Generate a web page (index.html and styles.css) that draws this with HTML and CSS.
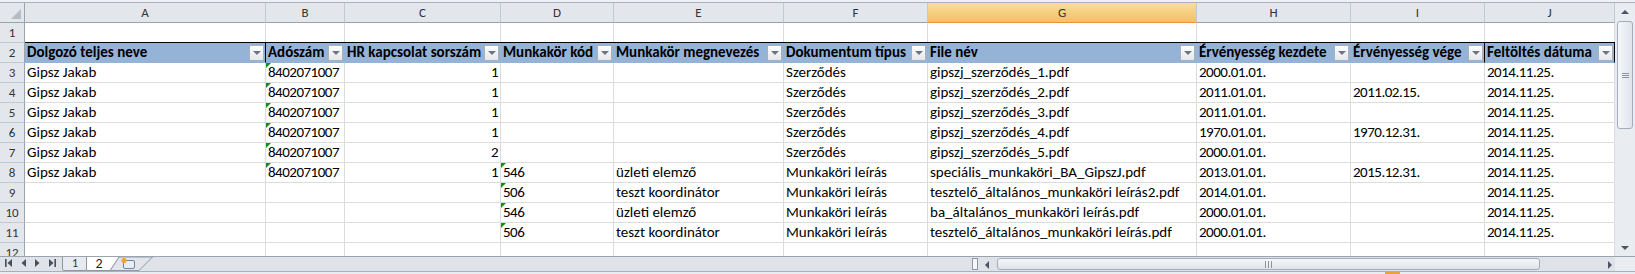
FILE: index.html
```html
<!DOCTYPE html>
<html lang="hu">
<head>
  <meta charset="UTF-8">
  <meta name="viewport" content="width=device-width, initial-scale=1.0">
  <title>Dokumentumok - munkalap 2</title>

  <link rel="stylesheet" href="styles.css">
</head>
<body>

  <div class="window">
    <div class="workarea">

      <div class="sheet">
        <!-- oszlopfejlécek -->
        <div class="cell corner"></div>
        <div class="cell col">A</div>
        <div class="cell col">B</div>
        <div class="cell col">C</div>
        <div class="cell col">D</div>
        <div class="cell col">E</div>
        <div class="cell col">F</div>
        <div class="cell col col_active">G</div>
        <div class="cell col">H</div>
        <div class="cell col">I</div>
        <div class="cell col">J</div>

        <!-- 1 -->
        <div class="cell row">1</div>
        <div class="cell"></div><div class="cell"></div><div class="cell"></div><div class="cell"></div><div class="cell"></div>
        <div class="cell"></div><div class="cell"></div><div class="cell"></div><div class="cell"></div><div class="cell"></div>

        <!-- 2: táblázat fejléc -->
        <div class="cell row">2</div>
        <div class="cell head head_edge"><span>Dolgozó teljes neve</span><span class="filter"></span></div>
        <div class="cell head"><span>Adószám</span><span class="filter"></span></div>
        <div class="cell head"><span>HR kapcsolat sorszám</span><span class="filter"></span></div>
        <div class="cell head"><span>Munkakör kód</span><span class="filter"></span></div>
        <div class="cell head"><span>Munkakör megnevezés</span><span class="filter"></span></div>
        <div class="cell head"><span>Dokumentum típus</span><span class="filter"></span></div>
        <div class="cell head"><span>File név</span><span class="filter"></span></div>
        <div class="cell head"><span>Érvényesség kezdete</span><span class="filter"></span></div>
        <div class="cell head head_edge"><span>Érvényesség vége</span><span class="filter"></span></div>
        <div class="cell head head_edge"><span>Feltöltés dátuma</span><span class="filter"></span></div>

        <!-- 3 -->
        <div class="cell row">3</div>
        <div class="cell">Gipsz Jakab</div>
        <div class="cell d t">8402071007</div>
        <div class="cell d num">1</div>
        <div class="cell"></div>
        <div class="cell"></div>
        <div class="cell">Szerződés</div>
        <div class="cell">gipszj_szerződés_1.pdf</div>
        <div class="cell d">2000.01.01.</div>
        <div class="cell"></div>
        <div class="cell d">2014.11.25.</div>

        <!-- 4 -->
        <div class="cell row">4</div>
        <div class="cell">Gipsz Jakab</div>
        <div class="cell d t">8402071007</div>
        <div class="cell d num">1</div>
        <div class="cell"></div>
        <div class="cell"></div>
        <div class="cell">Szerződés</div>
        <div class="cell">gipszj_szerződés_2.pdf</div>
        <div class="cell d">2011.01.01.</div>
        <div class="cell d">2011.02.15.</div>
        <div class="cell d">2014.11.25.</div>

        <!-- 5 -->
        <div class="cell row">5</div>
        <div class="cell">Gipsz Jakab</div>
        <div class="cell d t">8402071007</div>
        <div class="cell d num">1</div>
        <div class="cell"></div>
        <div class="cell"></div>
        <div class="cell">Szerződés</div>
        <div class="cell">gipszj_szerződés_3.pdf</div>
        <div class="cell d">2011.01.01.</div>
        <div class="cell"></div>
        <div class="cell d">2014.11.25.</div>

        <!-- 6 -->
        <div class="cell row">6</div>
        <div class="cell">Gipsz Jakab</div>
        <div class="cell d t">8402071007</div>
        <div class="cell d num">1</div>
        <div class="cell"></div>
        <div class="cell"></div>
        <div class="cell">Szerződés</div>
        <div class="cell">gipszj_szerződés_4.pdf</div>
        <div class="cell d">1970.01.01.</div>
        <div class="cell d">1970.12.31.</div>
        <div class="cell d">2014.11.25.</div>

        <!-- 7 -->
        <div class="cell row">7</div>
        <div class="cell">Gipsz Jakab</div>
        <div class="cell d t">8402071007</div>
        <div class="cell d num">2</div>
        <div class="cell"></div>
        <div class="cell"></div>
        <div class="cell">Szerződés</div>
        <div class="cell">gipszj_szerződés_5.pdf</div>
        <div class="cell d">2000.01.01.</div>
        <div class="cell"></div>
        <div class="cell d">2014.11.25.</div>

        <!-- 8 -->
        <div class="cell row">8</div>
        <div class="cell">Gipsz Jakab</div>
        <div class="cell d t">8402071007</div>
        <div class="cell d num">1</div>
        <div class="cell d t">546</div>
        <div class="cell">üzleti elemző</div>
        <div class="cell">Munkaköri leírás</div>
        <div class="cell">speciális_munkaköri_BA_GipszJ.pdf</div>
        <div class="cell d">2013.01.01.</div>
        <div class="cell d">2015.12.31.</div>
        <div class="cell d">2014.11.25.</div>

        <!-- 9 -->
        <div class="cell row">9</div>
        <div class="cell"></div>
        <div class="cell"></div>
        <div class="cell"></div>
        <div class="cell d t">506</div>
        <div class="cell">teszt koordinátor</div>
        <div class="cell">Munkaköri leírás</div>
        <div class="cell">tesztelő_általános_munkaköri leírás2.pdf</div>
        <div class="cell d">2014.01.01.</div>
        <div class="cell"></div>
        <div class="cell d">2014.11.25.</div>

        <!-- 10 -->
        <div class="cell row">10</div>
        <div class="cell"></div>
        <div class="cell"></div>
        <div class="cell"></div>
        <div class="cell d t">546</div>
        <div class="cell">üzleti elemző</div>
        <div class="cell">Munkaköri leírás</div>
        <div class="cell">ba_általános_munkaköri leírás.pdf</div>
        <div class="cell d">2000.01.01.</div>
        <div class="cell"></div>
        <div class="cell d">2014.11.25.</div>

        <!-- 11 -->
        <div class="cell row">11</div>
        <div class="cell"></div>
        <div class="cell"></div>
        <div class="cell"></div>
        <div class="cell d t">506</div>
        <div class="cell">teszt koordinátor</div>
        <div class="cell">Munkaköri leírás</div>
        <div class="cell">tesztelő_általános_munkaköri leírás.pdf</div>
        <div class="cell d">2000.01.01.</div>
        <div class="cell"></div>
        <div class="cell d">2014.11.25.</div>

        <!-- 12 -->
        <div class="cell row">12</div>
        <div class="cell"></div><div class="cell"></div><div class="cell"></div><div class="cell"></div><div class="cell"></div>
        <div class="cell"></div><div class="cell"></div><div class="cell"></div><div class="cell"></div><div class="cell"></div>
      </div>

      <div class="vscroll">
        <div class="vscroll__btn">
          <svg width="16" height="18" viewBox="0 0 16 18"><polygon points="4,11 12,11 8,7" fill="#4a5565"/></svg>
        </div>
        <div class="vscroll__thumb"><span class="grip"></span></div>
        <div class="vscroll__track"></div>
        <div class="vscroll__btn">
          <svg width="16" height="18" viewBox="0 0 16 18"><polygon points="4,8 12,8 8,12" fill="#4a5565"/></svg>
        </div>
      </div>
    </div>

    <div class="tabbar">
      <svg class="tabbar__nav" width="60" height="14" viewBox="0 0 60 14">
        <g fill="#46505e">
          <rect x="5" y="2" width="1.6" height="8"/>
          <polygon points="12,2 12,10 7.5,6"/>
          <polygon points="26,2 26,10 21.5,6"/>
          <polygon points="35,2 35,10 39.5,6"/>
          <polygon points="49,2 49,10 53.5,6"/>
          <rect x="54.4" y="2" width="1.6" height="8"/>
        </g>
      </svg>

      <div class="tabs">
        <svg class="tabs__shape" width="100" height="14" viewBox="0 0 100 14">
          <path d="M92.5,0 L79,13.5 L50,13.5 L59,0 Z" fill="#e2e6ec" stroke="#8f99a5"/>
          <rect x="63.5" y="3.5" width="11" height="8" rx="1.5" fill="#e6edf6" stroke="#6f86a3"/>
          <circle cx="64" cy="3.5" r="2.6" fill="#f2a531"/>
          <path d="M2.5,0 L2.5,12 Q2.5,13.5 4,13.5 L25,13.5 Q26.5,13.5 26.5,12 L26.5,0" fill="#e7eaee" stroke="#8f99a5"/>
          <path d="M26.5,0 L26.5,13.5 L50,13.5 L59,0" fill="#fff" stroke="#8f99a5"/>
        </svg>
        <span class="tab-label">1</span>
        <span class="tab-label tab-label_active">2</span>
      </div>

      <div class="tabbar__space"></div>

      <div class="hscroll">
        <div class="hscroll__split"></div>
        <div class="hscroll__btn">
          <svg width="18" height="14" viewBox="0 0 18 14"><polygon points="10,3 10,11 6,7" fill="#4a5565"/></svg>
        </div>
        <div class="hscroll__thumb"><span class="grip grip_v"></span></div>
        <div class="hscroll__track"></div>
        <div class="hscroll__btn">
          <svg width="18" height="14" viewBox="0 0 18 14"><polygon points="11,3 11,11 15,7" fill="#4a5565"/></svg>
        </div>
      </div>

      <div class="tabbar__corner"></div>
    </div>

    <div class="status">
      <span class="status__mark"></span>
    </div>
  </div>

</body>
</html>
```

FILE: styles.css
```css
*, *:after, *:before {
  box-sizing: border-box;
}

html, body {
  margin: 0;
  background-color: #fff;
  font-family: Carlito, Lato, 'Liberation Sans', sans-serif;
}

.window {
  display: flex;
  flex-direction: column;
  width: 1635px;
  height: 274px;
  overflow: hidden;
  background-color: #eef0f3;
}

.workarea {
  display: flex;
  height: 256px;
  padding-top: 2px;
}

/* munkalap rács */
.sheet {
  display: grid;
  grid-template-columns: 25px 241px 79px 156px 113px 170px 144px 269px 154px 134px 130px;
  grid-auto-rows: 20px;
  align-content: start;
  width: 1615px;
  overflow: hidden;
  background-color: #fff;
  border-top: 1px solid #a9b2bd;
}

.cell {
  position: relative;
  display: flex;
  align-items: center;
  min-width: 0;
  padding: 0 2px;
  border-right: 1px solid #dadcdd;
  border-bottom: 1px solid #dadcdd;
  color: #000;
  font-size: 15px;
  line-height: 19px;
  white-space: nowrap;
  overflow: hidden;
}

/* számjegyek: keskenyebb, mint a böngészőben */
.d {
  letter-spacing: -0.5px;
}

.corner, .col, .row {
  justify-content: center;
  background-color: #e3e7ec;
  border-right-color: #c3c9d0;
  border-bottom-color: #c3c9d0;
  color: #333;
  font-size: 13px;
}

.col {
  border-bottom-color: #9aa4af;
}

.row {
  border-right-color: #9aa4af;
}

.corner {
  border-right-color: #9aa4af;
  border-bottom-color: #9aa4af;
}

.corner:after {
  content: "";
  position: absolute;
  right: 3px;
  bottom: 3px;
  border-left: 10px solid transparent;
  border-bottom: 10px solid #b5bcc5;
}

.col_active {
  background: linear-gradient(#f9dc9f, #f2c262);
  border-bottom-color: #f29436;
}

.head {
  padding-right: 1px;
  background-color: #95b3d7;
  border-right-color: #95b3d7;
  border-bottom-color: #95b3d7;
  font-weight: 700;
  box-shadow: 0 -1px 0 #000;
}

.head_edge {
  border-right-color: #000;
}

.filter {
  position: relative;
  flex: none;
  width: 15px;
  height: 16px;
  margin-left: auto;
  border: 1px solid #a9b2bc;
  background: linear-gradient(#fdfdfd, #e4e8ec);
}

.filter:after {
  content: "";
  position: absolute;
  left: 3px;
  top: 5px;
  border-left: 4px solid transparent;
  border-right: 4px solid transparent;
  border-top: 4px solid #6e7580;
}

.num {
  justify-content: flex-end;
}

/* szövegként tárolt szám */
.t:before {
  content: "";
  position: absolute;
  left: 0;
  top: 0;
  border-top: 5px solid #1a8a1f;
  border-right: 5px solid transparent;
}

/* görgetősávok */
.vscroll {
  display: flex;
  flex-direction: column;
  width: 20px;
  padding: 0 2px;
  background-color: #e9ecf0;
  border-top: 1px solid #a9b2bd;
}

.vscroll__btn {
  flex: none;
  height: 18px;
}

.vscroll__thumb {
  display: flex;
  align-items: center;
  justify-content: center;
  flex: none;
  height: 108px;
  border: 1px solid #a3adb9;
  border-radius: 3px;
  background: linear-gradient(90deg, #f6f7f9, #dfe4ea);
}

.vscroll__track {
  flex: 1;
}

.grip {
  width: 7px;
  height: 5px;
  border-top: 1px solid #8b96a3;
  border-bottom: 1px solid #8b96a3;
  background: linear-gradient(transparent 1px, #8b96a3 1px, #8b96a3 2px, transparent 2px);
}

.grip_v {
  width: 7px;
  height: 7px;
  border: none;
  border-left: 1px solid #8b96a3;
  border-right: 1px solid #8b96a3;
  background: linear-gradient(90deg, transparent 2px, #8b96a3 2px, #8b96a3 3px, transparent 3px);
}

.tabbar {
  display: flex;
  height: 15px;
  border-top: 1px solid #9aa4af;
  background-color: #dfe3e9;
}

.tabbar__nav {
  flex: none;
  display: block;
}

/* munkalapfülek */
.tabs {
  position: relative;
  flex: none;
  width: 100px;
  height: 14px;
}

.tabs__shape {
  display: block;
}

.tab-label {
  position: absolute;
  top: 0;
  left: 9px;
  width: 12px;
  color: #333;
  font-size: 12px;
  line-height: 13px;
  text-align: center;
}

.tab-label_active {
  left: 32px;
  width: 14px;
  color: #1e1e1e;
  font-size: 14px;
  line-height: 14px;
}

.tabbar__space {
  flex: 1;
}

.hscroll {
  display: flex;
  align-items: stretch;
  width: 645px;
}

.hscroll__split {
  flex: none;
  width: 6px;
  margin: 1px 1px 1px 2px;
  border: 1px solid #8e98a4;
  background-color: #f4f6f8;
}

.hscroll__btn {
  flex: none;
  width: 18px;
}

.hscroll__thumb {
  display: flex;
  align-items: center;
  justify-content: center;
  flex: none;
  width: 543px;
  margin: 1px 0;
  border: 1px solid #a3adb9;
  border-radius: 3px;
  background: linear-gradient(#f6f7f9, #dfe4ea);
}

.hscroll__track {
  flex: 1;
}

.tabbar__corner {
  flex: none;
  width: 20px;
  background-color: #e9ecf0;
}

.status {
  display: flex;
  height: 3px;
  padding-left: 1385px;
  border-top: 1px solid #a7b0bb;
  background-color: #e9edf2;
}

.status__mark {
  width: 15px;
  background-color: #e8a33d;
}
```
